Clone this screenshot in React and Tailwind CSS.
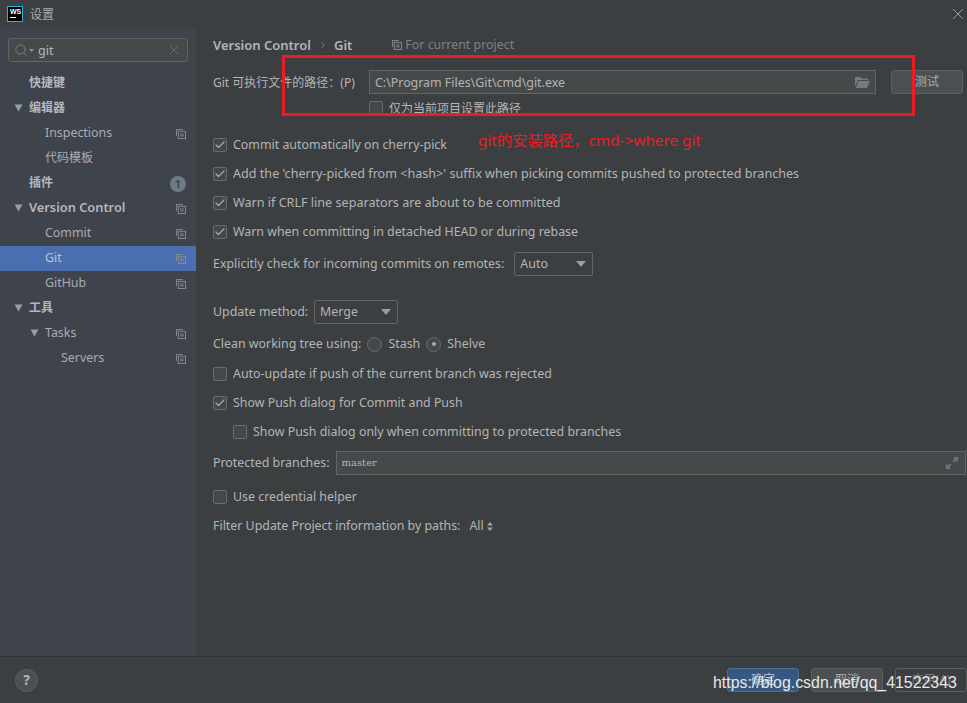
import { X, Search, ChevronRight, Check } from "lucide-react";

const font = "font-['Noto_Sans','Noto_Sans_CJK_SC',sans-serif]";

function CopyIcon() {
  return (
    <svg width="10" height="10" viewBox="0 0 11 11" fill="none" stroke="#8a8f94" strokeWidth="1" className="shrink-0">
      <path d="M0.5 7.5V0.5H7.5" />
      <rect x="2.5" y="2.5" width="8" height="8" />
      <path d="M4.5 5.5H8.5M4.5 7.5H8.5" />
    </svg>
  );
}

function Arrow() {
  return (
    <svg width="9" height="8" viewBox="0 0 10 9" className="block shrink-0">
      <path d="M0.5 0.5H9.5L5 8.5Z" fill="#9a9d9f" />
    </svg>
  );
}

function TreeRow({ label, indent = "pl-[29px]", arrowLeft, bold, cjk, selected, copy, badge }) {
  return (
    <div className={`relative flex h-[25px] items-center justify-between pr-[10px] ${indent} ${selected ? "bg-[#4b6eaf]" : ""}`}>
      {arrowLeft && (
        <span className={`absolute top-[8px] ${arrowLeft}`}>
          <Arrow />
        </span>
      )}
      <span className={`leading-none ${cjk ? "text-[12px]" : bold ? "text-[12.8px]" : "text-[12.4px]"} ${cjk || bold ? "-translate-y-px" : ""} ${bold ? "font-semibold text-[#b4b8bc]" : "text-[#a9adb1]"} ${selected ? "text-[#b9c3d3]" : ""}`}>
        {label}
      </span>
      {copy && <CopyIcon />}
      {badge && (
        <span className="flex h-[16px] w-[16px] items-center justify-center rounded-full bg-[#6e7a85] text-[11px] font-semibold leading-none text-[#3c3f41]">
          {badge}
        </span>
      )}
    </div>
  );
}

function Checkbox({ checked, label, size = "text-[12.4px]" }) {
  return (
    <div className="flex h-[20px] items-center gap-[6px]">
      <span className="flex h-[14px] w-[14px] shrink-0 items-center justify-center rounded-[2px] border border-[#6b6b6b] bg-[#43494a]">
        {checked && <Check size={12} strokeWidth={2.5} className="text-[#a7a7a7]" />}
      </span>
      <span className={`${size} leading-none text-[#b3b5b6]`}>{label}</span>
    </div>
  );
}

function Radio({ checked, label }) {
  return (
    <div className="flex items-center gap-[6px]">
      <span className="flex h-[15px] w-[15px] items-center justify-center rounded-full border border-[#6b6b6b] bg-[#43494a]">
        {checked && <span className="h-[4px] w-[4px] rounded-full bg-[#a9a9a9]" />}
      </span>
      <span className="text-[12.4px] leading-none text-[#b3b5b6]">{label}</span>
    </div>
  );
}

function Select({ value, width }) {
  return (
    <div className={`flex h-[24px] items-center justify-between rounded-[2px] border border-[#646464] pl-[5px] pr-[4px] ${width}`}>
      <span className="text-[12.4px] leading-none text-[#b3b5b6]">{value}</span>
      <svg width="12" height="6" viewBox="0 0 12 6" className="mr-[1px]">
        <path d="M1 0H11L6 6Z" fill="#9a9d9f" />
      </svg>
    </div>
  );
}

function DialogButton({ label, primary }) {
  return (
    <div className={`flex h-[24px] w-[72px] items-center justify-center rounded-[3px] border text-[12px] leading-none ${primary ? "border-[#4c708c] bg-[#365880] text-[#b9c3d3]" : "border-[#5e6060] bg-[#4c5052] text-[#a9adb1]"}`}>
      {label}
    </div>
  );
}

export default function App() {
  return (
    <div className={`relative flex h-[703px] w-[967px] flex-col overflow-hidden bg-[#3c3f41] ${font}`}>
      {/* title bar */}
      <div className="flex h-[28px] shrink-0 items-center justify-between bg-[#3c3f41] pl-[7px] pr-[4px]">
        <div className="flex items-center gap-[7px]">
          <div className="flex h-[16px] w-[16px] flex-col border border-[#21b5e8] bg-black px-[2px] pt-[1px]">
            <span className="font-['Liberation_Sans',sans-serif] text-[7px] font-bold leading-[8px] text-white">WS</span>
            <span className="mt-[1px] h-[1px] w-[6px] bg-white" />
          </div>
          <span className="translate-y-px text-[12px] leading-none text-[#a9adb1]">设置</span>
        </div>
        <svg width="10" height="10" viewBox="0 0 10 10" stroke="#a0a3a5" strokeWidth="0.9">
          <path d="M0 0L10 10M10 0L0 10" />
        </svg>
      </div>

      <div className="flex min-h-0 flex-1">
        {/* sidebar */}
        <aside className="flex w-[196px] shrink-0 flex-col bg-[#3e434c]">
          <div className="ml-[8px] mt-[10px] flex h-[24px] w-[180px] items-center rounded-[3px] border border-[#5f6364] bg-[#45494a] pl-[5px] pr-[5px]">
            <Search size={14} strokeWidth={1.25} className="text-[#8d9194]" />
            <svg width="5" height="3" viewBox="0 0 5 3" className="ml-[1px]">
              <path d="M0 0H5L2.5 3Z" fill="#8d9194" />
            </svg>
            <span className="ml-[4px] flex-1 translate-y-px text-[12.6px] leading-none text-[#b3b5b6]">git</span>
            <X size={16} strokeWidth={0.9} className="text-[#7d8184]" />
          </div>
          <div className="mt-[9px]">
            <TreeRow label="快捷键" bold cjk />
            <TreeRow label="编辑器" bold cjk arrowLeft="left-[14px]" />
            <TreeRow label="Inspections" indent="pl-[45px]" copy />
            <TreeRow label="代码模板" indent="pl-[45px]" cjk />
            <TreeRow label="插件" bold cjk badge="1" />
            <TreeRow label="Version Control" bold arrowLeft="left-[14px]" copy />
            <TreeRow label="Commit" indent="pl-[45px]" copy />
            <TreeRow label="Git" indent="pl-[45px]" selected copy />
            <TreeRow label="GitHub" indent="pl-[45px]" copy />
            <TreeRow label="工具" bold cjk arrowLeft="left-[14px]" />
            <TreeRow label="Tasks" indent="pl-[45px]" arrowLeft="left-[30px]" copy />
            <TreeRow label="Servers" indent="pl-[61px]" copy />
          </div>
        </aside>

        {/* settings form */}
        <main className="min-w-0 flex-1 pl-[17px] pr-[1px]">
          <div className="mt-[7px] flex h-[20px] items-center">
            <span className="text-[13px] font-semibold leading-none text-[#b3b5b6]">Version Control</span>
            <ChevronRight size={10} strokeWidth={1.5} className="ml-[7px] mr-[6px] text-[#a0a3a5]" />
            <span className="text-[13px] font-semibold leading-none text-[#b3b5b6]">Git</span>
            <span className="ml-[40px] mr-[3px]"><CopyIcon /></span>
            <span className="text-[12.4px] leading-none text-[#7d8184]">For current project</span>
          </div>

          <div className="mt-[15px] flex h-[24px] items-center">
            <span className="w-[156px] shrink-0 translate-y-px text-[12px] leading-none text-[#b3b5b6]">Git 可执行文件的路径：(P)</span>
            <div className="flex h-[24px] w-[507px] items-center justify-between border border-[#646464] bg-[#45494a] pl-[5px] pr-[5px]">
              <span className="translate-y-px text-[12.4px] leading-none text-[#b3b5b6]">C:\Program Files\Git\cmd\git.exe</span>
              <svg width="15" height="12" viewBox="0 0 15 12">
                <path d="M0 1H5L6.5 2.5H13V4H3L0 11Z" fill="#6e7c85" />
                <path d="M3.5 5H15L12 12H0.8Z" fill="#6e7c85" />
              </svg>
            </div>
            <div className="ml-[15px] flex h-[24px] w-[72px] items-center justify-center rounded-[3px] border border-[#5e6060] bg-[#4c5052] text-[12px] leading-none text-[#a9adb1]">
              测试
            </div>
          </div>
          <div className="ml-[156px] mt-[7px] flex h-[15px] items-start gap-[6px]">
            <span className="h-[14px] w-[14px] shrink-0 rounded-[2px] border border-[#6b6b6b] bg-[#43494a]" />
            <span className="text-[12px] leading-[15px] text-[#b3b5b6]">仅为当前项目设置此路径</span>
          </div>

          <div className="mt-[19px] flex flex-col gap-[9px]">
            <Checkbox checked label="Commit automatically on cherry-pick" />
            <Checkbox checked size="text-[12.6px]" label="Add the 'cherry-picked from <hash>' suffix when picking commits pushed to protected branches" />
            <Checkbox checked size="text-[12.6px]" label="Warn if CRLF line separators are about to be committed" />
            <Checkbox checked label="Warn when committing in detached HEAD or during rebase" />
          </div>

          <div className="mt-[10px] flex h-[24px] items-center gap-[10px]">
            <span className="text-[12.4px] leading-none text-[#b3b5b6]">Explicitly check for incoming commits on remotes:</span>
            <Select value="Auto" width="w-[79px]" />
          </div>

          <div className="mt-[24px] flex h-[24px] items-center gap-[6px]">
            <span className="text-[12.4px] leading-none text-[#b3b5b6]">Update method:</span>
            <Select value="Merge" width="w-[84px]" />
          </div>

          <div className="mt-[8px] flex h-[24px] items-center gap-[6px]">
            <span className="text-[12.4px] leading-none text-[#b3b5b6]">Clean working tree using:</span>
            <Radio label="Stash" />
            <Radio checked label="Shelve" />
          </div>

          <div className="mt-[8px] flex flex-col gap-[9px]">
            <Checkbox label="Auto-update if push of the current branch was rejected" />
            <Checkbox checked label="Show Push dialog for Commit and Push" />
            <div className="pl-[20px]">
              <Checkbox label="Show Push dialog only when committing to protected branches" />
            </div>
          </div>

          <div className="mt-[9px] flex h-[24px] items-center gap-[6px]">
            <span className="text-[12.4px] leading-none text-[#b3b5b6]">Protected branches:</span>
            <div className="flex h-[24px] flex-1 items-center justify-between border border-[#646464] bg-[#45494a] pl-[5px] pr-[7px]">
              <span className="font-['DejaVu_Serif',serif] text-[10px] leading-none text-[#b3b5b6]">master</span>
              <svg width="12" height="12" viewBox="0 0 12 12" fill="#6f7678">
                <path d="M7 0H12V5L10.2 3.2L8 5.4L6.6 4L8.8 1.8Z" />
                <path d="M5 12H0V7L1.8 8.8L4 6.6L5.4 8L3.2 10.2Z" />
              </svg>
            </div>
          </div>

          <div className="mt-[12px]">
            <Checkbox label="Use credential helper" />
          </div>

          <div className="mt-[9px] flex h-[20px] items-center gap-[9px]">
            <span className="text-[12.4px] leading-none text-[#b3b5b6]">Filter Update Project information by paths:</span>
            <span className="flex items-center gap-[3px] text-[12.4px] leading-none text-[#b3b5b6]">
              All
              <svg width="6" height="9" viewBox="0 0 6 9" fill="#a0a3a5">
                <path d="M0 3.5L3 0L6 3.5Z" />
                <path d="M0 5.5L3 9L6 5.5Z" />
              </svg>
            </span>
          </div>
        </main>
      </div>

      {/* footer */}
      <footer className="flex h-[47px] shrink-0 items-center justify-between border-t border-[#323232] pl-[15px]">
        <div className="flex h-[23px] w-[23px] items-center justify-center rounded-full border border-[#5a5e60] bg-[#4c5052] text-[14px] font-bold leading-none text-[#b3b5b6]">
          ?
        </div>
        <div className="flex gap-[12px]">
          <DialogButton label="确定" primary />
          <DialogButton label="取消" />
          <div className="flex h-[24px] w-[72px] items-center justify-center rounded-[3px] border border-[#5e6060] text-[12px] leading-none text-[#787a7c]">
            应用(A)
          </div>
        </div>
      </footer>

      {/* red annotation over the form */}
      <div className="absolute left-[282px] top-[55px] h-[61px] w-[633px] border-[3px] border-[#ed1c24]" />
      <span className="absolute left-[478px] top-[130px] text-[15.3px] leading-[20px] text-[#ed1c24]">git的安装路径，cmd-&gt;where git</span>

      {/* csdn watermark */}
      <span className="absolute left-[713px] top-[673px] font-['Liberation_Sans',sans-serif] text-[15.9px] leading-[20px] text-[#e8e8e8]">
        https://blog.csdn.net/qq_41522343
      </span>
    </div>
  );
}
